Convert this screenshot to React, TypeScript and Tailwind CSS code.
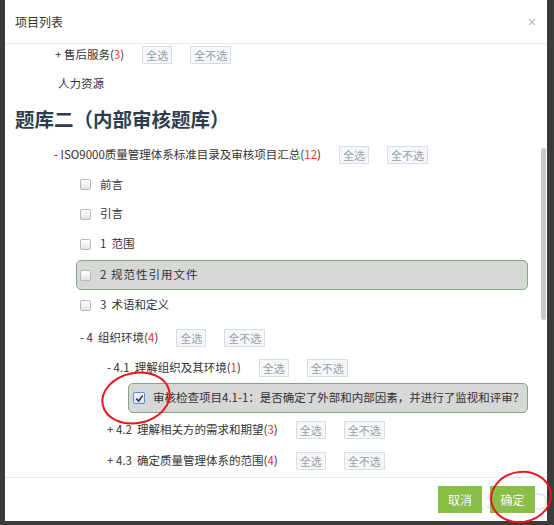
import React from "react";

const font = { fontFamily: "'Noto Sans CJK SC', 'Noto Sans', sans-serif" };

function Btn({ children }: { children: React.ReactNode }) {
  return (
    <span className="inline-flex h-[18px] items-center border border-[#d8dee6] bg-[#f5f7fa] px-[3px] text-[11px] leading-none text-[#9aa1a9]">
      {children}
    </span>
  );
}

function Btns() {
  return (
    <span className="ml-[18px] inline-flex items-center gap-[18px]">
      <Btn>全选</Btn>
      <Btn>全不选</Btn>
    </span>
  );
}

function Cb({ checked }: { checked?: boolean }) {
  if (checked) {
    return (
      <span className="flex h-[12px] w-[12px] items-center justify-center rounded-[2px] border border-[#5b8ed6] bg-gradient-to-b from-[#f4f8fd] to-[#d9e6f5]">
        <svg width="9" height="9" viewBox="0 0 10 10">
          <path d="M1.5 5.2 L4 7.8 L8.6 1.8" fill="none" stroke="#333" strokeWidth="1.8" />
        </svg>
      </span>
    );
  }
  return (
    <span className="block h-[11px] w-[11px] rounded-[2px] border border-[#b8b8b8] bg-gradient-to-b from-white to-[#e4e4e4]" />
  );
}

function Num({ n }: { n: string }) {
  return (
    <span>
      (<span className="text-[#ff2a2a]">{n}</span>)
    </span>
  );
}

export default function App() {
  return (
    <div
      className="relative h-[525px] w-[554px] overflow-hidden bg-[#3b3b3b] text-[11.5px] text-[#333]"
      style={font}
    >
      <div className="flex h-full">
        <div className="w-[5px]" />
        <div className="flex h-[521px] w-[542px] flex-col bg-white">
          {/* header */}
          <div className="flex h-[44px] shrink-0 items-center justify-between border-b border-[#e8e8e8] pl-[10px] pr-[10px]">
            <span className="text-[12px] text-[#333]">项目列表</span>
            <svg width="8" height="8" viewBox="0 0 8 8" className="mr-[1px]">
              <path d="M1 1 L7 7 M7 1 L1 7" stroke="#c4c4c4" strokeWidth="1.3" />
            </svg>
          </div>
          {/* body */}
          <div className="relative flex-1 overflow-hidden">
            <div className="flex flex-col">
              <div className="ml-[50px] flex h-[22px] items-center">
                <span className="whitespace-pre">+ 售后服务<Num n="3" /></span>
                <Btns />
              </div>
              <div className="ml-[53px] flex h-[36px] items-center">人力资源</div>
              <div className="ml-[10px] flex h-[34px] items-center text-[19.5px] font-bold text-[#2e3d4d]">
                题库二（内部审核题库）
              </div>
              <div className="ml-[49px] mt-[4px] flex h-[30px] items-center">
                <span className="whitespace-pre">- ISO9000质量管理体系标准目录及审核项目汇总<Num n="12" /></span>
                <Btns />
              </div>
              <div className="ml-[75px] flex h-[29px] items-center gap-[9px]">
                <Cb />
                <span>前言</span>
              </div>
              <div className="ml-[75px] flex h-[30px] items-center gap-[9px]">
                <Cb />
                <span>引言</span>
              </div>
              <div className="ml-[75px] flex h-[30px] items-center gap-[9px]">
                <Cb />
                <span className="whitespace-pre">1  范围</span>
              </div>
              <div className="ml-[71px] mr-[19px] mt-[1px] flex h-[30px] items-center gap-[9px] rounded-[5px] border border-[#82a584] bg-[#d7d7d7] pl-[3px]">
                <Cb />
                <span className="whitespace-pre tracking-[1px]">2 规范性引用文件</span>
              </div>
              <div className="ml-[75px] flex h-[30px] items-center gap-[9px]">
                <Cb />
                <span className="whitespace-pre">3  术语和定义</span>
              </div>
              <div className="ml-[75px] mt-[3px] flex h-[30px] items-center">
                <span className="whitespace-pre">- 4  组织环境<Num n="4" /></span>
                <Btns />
              </div>
              <div className="ml-[102px] flex h-[30px] items-center">
                <span className="whitespace-pre">- 4.1  理解组织及其环境<Num n="1" /></span>
                <Btns />
              </div>
              <div className="ml-[123px] mr-[19px] flex h-[30px] items-center gap-[8px] rounded-[5px] border border-[#82a584] bg-[#d7d7d7] pl-[4px]">
                <Cb checked />
                <span className="whitespace-pre">审核检查项目4.1-1：是否确定了外部和内部因素，并进行了监视和评审？</span>
              </div>
              <div className="ml-[102px] mt-[2px] flex h-[30px] items-center">
                <span className="whitespace-pre">+ 4.2  理解相关方的需求和期望<Num n="3" /></span>
                <Btns />
              </div>
              <div className="ml-[102px] mt-[1px] flex h-[30px] items-center">
                <span className="whitespace-pre">+ 4.3  确定质量管理体系的范围<Num n="4" /></span>
                <Btns />
              </div>
            </div>
            {/* scrollbar thumb */}
            <div className="absolute right-[1px] top-[104px] h-[172px] w-[5px] rounded-full bg-[#c9c9c9]" />
          </div>
          {/* footer */}
          <div className="flex h-[44px] shrink-0 items-center justify-end gap-[8px] border-t border-[#e8e8e8] pr-[12px]">
            <span className="flex h-[27px] w-[44px] items-center justify-center bg-[#88c043] text-[12px] text-white">取消</span>
            <span className="flex h-[27px] w-[45px] items-center justify-center bg-[#88c043] text-[12px] text-white">确定</span>
          </div>
        </div>
      </div>
      {/* watermark */}
      <div
        className="pointer-events-none absolute left-[449px] top-[490px] text-[24px] leading-none tracking-[1px] text-[rgba(170,170,170,0.28)]"
        style={{ fontFamily: "'Liberation Sans', sans-serif" }}
      >
        OKSLTD
      </div>
      {/* annotation circles */}
      <svg className="pointer-events-none absolute left-0 top-0" width="554" height="525">
        <ellipse cx="136" cy="398" rx="34" ry="25" fill="none" stroke="#e8161c" strokeWidth="2" transform="rotate(-12 136 398)" />
        <ellipse cx="521" cy="497" rx="30" ry="25" fill="none" stroke="#e8161c" strokeWidth="2" transform="rotate(-10 521 497)" />
      </svg>
    </div>
  );
}
